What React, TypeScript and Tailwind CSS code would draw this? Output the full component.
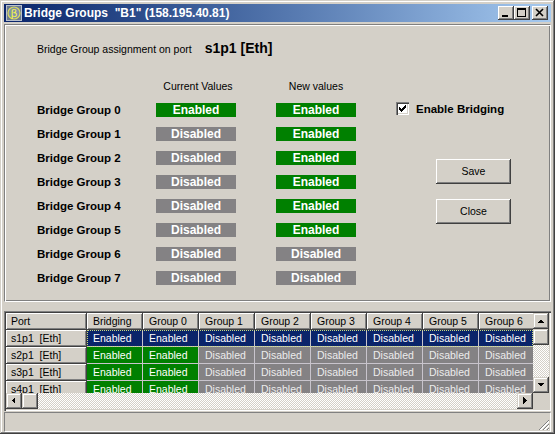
import React from "react";

// Win2000-style "Bridge Groups" dialog

const raisedBtn =
  "bg-[#d4d0c8] shadow-[inset_-1px_-1px_0_#404040,inset_1px_1px_0_#fff,inset_-2px_-2px_0_#808080]";
const scrollBtn =
  "bg-[#d4d0c8] shadow-[inset_-1px_-1px_0_#404040,inset_1px_1px_0_#d4d0c8,inset_-2px_-2px_0_#808080,inset_2px_2px_0_#fff]";
const dither =
  "bg-[image:repeating-conic-gradient(#fff_0_25%,#d4d0c8_0_50%)] bg-[length:2px_2px]";
const hdrCell =
  "shrink-0 bg-[#d4d0c8] border-r border-b border-[#404040] shadow-[inset_1px_1px_0_#fff,inset_-1px_-1px_0_#808080] text-[10.5px] leading-[16px] text-black whitespace-pre";

const CHECK = ["......X", ".....XX", "X...XXX", "XX.XXX.", "XXXXX..", ".XXX...", "..X...."];

const groups = [0, 1, 2, 3, 4, 5, 6, 7].map((i) => ({
  name: `Bridge Group ${i}`,
  current: i === 0,
  next: i <= 5,
}));

const cols = ["Bridging", "Group 0", "Group 1", "Group 2", "Group 3", "Group 4", "Group 5", "Group 6"];
const ports = ["s1p1  [Eth]", "s2p1  [Eth]", "s3p1  [Eth]", "s4p1  [Eth]"];
const rowVals = [true, true, false, false, false, false, false, false];

function Badge({ on }: { on: boolean }) {
  return (
    <div
      className={`w-[80px] h-[14px] leading-[14px] text-center text-[12px] font-bold text-white ${
        on ? "bg-[#008000]" : "bg-[#848284]"
      }`}
    >
      {on ? "Enabled" : "Disabled"}
    </div>
  );
}

function Arrow({ dir }: { dir: "up" | "down" | "left" | "right" }) {
  const pts = {
    up: "4,10 11,10 7.5,6.5",
    down: "4,6 11,6 7.5,9.5",
    left: "9,4 9,11 5.5,7.5",
    right: "6,4 6,11 9.5,7.5",
  }[dir];
  return (
    <svg width="16" height="16" viewBox="0 0 16 16" shapeRendering="crispEdges">
      <polygon points={pts} fill="#000" />
    </svg>
  );
}

function TitleButton({ kind }: { kind: "min" | "max" | "close" }) {
  return (
    <div className={`w-[16px] h-[14px] ${raisedBtn}`}>
      <svg width="16" height="14" viewBox="0 0 16 14" shapeRendering="crispEdges">
        {kind === "min" && <rect x="4" y="9" width="6" height="2" fill="#000" />}
        {kind === "max" && (
          <>
            <rect x="3" y="2" width="9" height="2" fill="#000" />
            <rect x="3" y="2" width="1" height="9" fill="#000" />
            <rect x="11" y="2" width="1" height="9" fill="#000" />
            <rect x="3" y="10" width="9" height="1" fill="#000" />
          </>
        )}
        {kind === "close" && (
          <path d="M4 3 L11 10 M11 3 L4 10" stroke="#000" strokeWidth="1.6" fill="none" shapeRendering="auto" />
        )}
      </svg>
    </div>
  );
}

export default function App() {
  return (
    <div className="w-[555px] h-[434px] bg-[#d4d0c8] flex flex-col px-[4px] pt-[4px] pb-[2px] font-['Liberation_Sans',Arial,sans-serif] text-black shadow-[inset_-1px_-1px_0_#404040,inset_1px_1px_0_#d4d0c8,inset_-2px_-2px_0_#808080,inset_2px_2px_0_#fff] overflow-hidden">
      {/* title bar */}
      <div className="h-[18px] shrink-0 flex items-center pl-[2px] pr-[3px] bg-linear-to-r from-[#0a246a] to-[#a6caf0]">
        <svg width="16" height="16" viewBox="0 0 16 16">
          <rect x="0.5" y="0.5" width="15" height="15" fill="#6b7a90" stroke="#b8c0cc" />
          <circle cx="8" cy="8" r="6" fill="#8090a8" stroke="#d8d860" strokeWidth="1.2" />
          <text x="8" y="12" fontSize="11" textAnchor="middle" fill="#f0f050" fontFamily="DejaVu Sans, sans-serif">
            β
          </text>
        </svg>
        <span className="ml-[2px] text-[12px] leading-[18px] font-bold text-white whitespace-pre">
          Bridge Groups  "B1" (158.195.40.81)
        </span>
        <div className="ml-auto flex">
          <TitleButton kind="min" />
          <TitleButton kind="max" />
          <div className="ml-[2px]">
            <TitleButton kind="close" />
          </div>
        </div>
      </div>

      {/* top panel */}
      <div className="mt-[2px] h-[278px] shrink-0 border border-t-[#808080] border-l-[#808080] border-b-white border-r-white shadow-[inset_1px_1px_0_#fff,inset_-1px_-1px_0_#808080] pl-[32px]">
        <div className="mt-[14px] h-[18px] flex items-baseline">
          <span className="text-[10.5px] leading-[18px]">Bridge Group assignment on port</span>
          <span className="ml-[13px] text-[14px] leading-[18px] font-bold">s1p1 [Eth]</span>
        </div>

        <div className="mt-[22px] flex">
          <div className="flex flex-col">
            <div className="flex h-[14px] text-[10.5px] leading-[14px]">
              <div className="w-[119px]" />
              <div className="w-[80px] text-center pl-[4px]">Current Values</div>
              <div className="w-[40px]" />
              <div className="w-[80px] text-center">New values</div>
            </div>
            <div className="mt-[5px] flex flex-col">
              {groups.map((g) => (
                <div key={g.name} className="h-[24px] flex items-center">
                  <div className="w-[119px] text-[11.5px] leading-[14px] font-bold">{g.name}</div>
                  <Badge on={g.current} />
                  <div className="w-[40px]" />
                  <Badge on={g.next} />
                </div>
              ))}
            </div>
          </div>

          <div className="ml-[40px] pt-[23px] flex flex-col">
            <div className="h-[13px] flex items-center">
              <div className="w-[13px] h-[13px] bg-white flex items-center justify-center shadow-[inset_1px_1px_0_#808080,inset_2px_2px_0_#404040,inset_-1px_-1px_0_#fff,inset_-2px_-2px_0_#d4d0c8]">
                <svg width="7" height="7" viewBox="0 0 7 7" shapeRendering="crispEdges">
                  {CHECK.flatMap((r, y) =>
                    r.split("").map((c, x) =>
                      c === "X" ? <rect key={`${x}-${y}`} x={x} y={y} width="1" height="1" fill="#000" /> : null
                    )
                  )}
                </svg>
              </div>
              <span className="ml-[7px] text-[11.5px] leading-[14px] font-bold">Enable Bridging</span>
            </div>
            <button className={`mt-[44px] ml-[40px] w-[75px] h-[25px] text-[10.5px] ${raisedBtn}`}>Save</button>
            <button className={`mt-[15px] ml-[40px] w-[75px] h-[25px] text-[10.5px] ${raisedBtn}`}>Close</button>
          </div>
        </div>
      </div>

      {/* grid */}
      <div className="mt-[9px] h-[100px] shrink-0 p-[2px] flex flex-col shadow-[inset_1px_1px_0_#808080,inset_2px_2px_0_#404040,inset_-1px_-1px_0_#fff,inset_-2px_-2px_0_#d4d0c8]">
        <div className="h-[80px] flex">
          <div className="flex-1 overflow-hidden">
            <div className="flex h-[17px]">
              <div className={`w-[81px] pl-[5px] ${hdrCell}`}>Port</div>
              {cols.map((c) => (
                <div key={c} className={`w-[56px] pl-[6px] ${hdrCell}`}>
                  {c}
                </div>
              ))}
            </div>
            {ports.map((p, ri) => {
              const sel = ri === 0;
              return (
                <div key={p} className="relative flex h-[17px]">
                  <div className={`w-[81px] pl-[5px] ${hdrCell}`}>{p}</div>
                  {rowVals.map((on, ci) => (
                    <div
                      key={ci}
                      className={`w-[56px] shrink-0 pl-[6px] border-r border-b border-[#c8c4cc] text-[10.5px] leading-[16px] ${
                        sel
                          ? "bg-[#0a246a] text-white"
                          : on
                          ? "bg-[#008000] text-white"
                          : "bg-[#848284] text-[#ececec]"
                      }`}
                    >
                      {on ? "Enabled" : "Disabled"}
                    </div>
                  ))}
                  {sel && (
                    <div className="absolute left-[81px] right-0 top-0 h-[17px] border border-dotted border-[#c8d880]" />
                  )}
                </div>
              );
            })}
          </div>
          <div className="w-[16px] flex flex-col">
            <div className={`h-[16px] ${scrollBtn}`}>
              <Arrow dir="up" />
            </div>
            <div className={`h-[16px] ${scrollBtn}`} />
            <div className={`flex-1 ${dither}`} />
            <div className={`h-[16px] ${scrollBtn}`}>
              <Arrow dir="down" />
            </div>
          </div>
        </div>
        <div className="h-[16px] flex">
          <div className="flex-1 flex">
            <div className={`w-[16px] ${scrollBtn}`}>
              <Arrow dir="left" />
            </div>
            <div className={`w-[16px] ${scrollBtn}`} />
            <div className={`flex-1 ${dither}`} />
            <div className={`w-[16px] ${scrollBtn}`}>
              <Arrow dir="right" />
            </div>
          </div>
          <div className="w-[16px] bg-[#d4d0c8]" />
        </div>
      </div>

      {/* status bar */}
      <div className="mt-[1px] h-[20px] shrink-0 border border-t-[#808080] border-l-[#808080] border-b-white border-r-white flex items-end justify-end">
        <svg width="12" height="12" viewBox="0 0 12 12" shapeRendering="crispEdges">
          <path d="M11 1 L1 11 M11 5 L5 11 M11 9 L9 11" stroke="#808080" strokeWidth="1.4" fill="none" />
          <path d="M11 2.5 L2.5 11 M11 6.5 L6.5 11 M11 10.5 L10.5 11" stroke="#fff" strokeWidth="1" fill="none" />
        </svg>
      </div>
    </div>
  );
}
